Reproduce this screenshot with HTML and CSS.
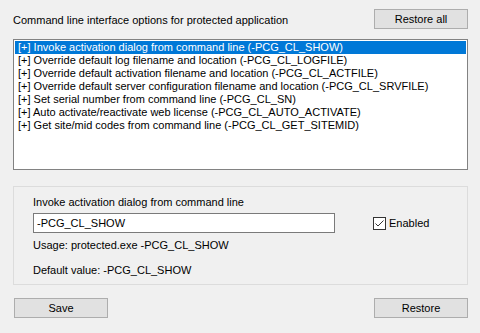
FILE: index.html
```html
<!DOCTYPE html>
<html lang="en">

<head>
    <meta charset="UTF-8">
    <meta name="viewport" content="width=device-width, initial-scale=1.0">
    <title>Command line options</title>
    <link rel="stylesheet" href="styles.css">
</head>

<body>
    <div class="dialog">
        <div class="header">
            <span class="caption">Command line interface options for protected application</span>
            <button class="btn">Restore all</button>
        </div>

        <ul class="listbox">
            <li class="selected">[+] Invoke activation dialog from command line (-PCG_CL_SHOW)</li>
            <li>[+] Override default log filename and location (-PCG_CL_LOGFILE)</li>
            <li>[+] Override default activation filename and location (-PCG_CL_ACTFILE)</li>
            <li>[+] Override default server configuration filename and location (-PCG_CL_SRVFILE)</li>
            <li>[+] Set serial number from command line (-PCG_CL_SN)</li>
            <li>[+] Auto activate/reactivate web license (-PCG_CL_AUTO_ACTIVATE)</li>
            <li>[+] Get site/mid codes from command line (-PCG_CL_GET_SITEMID)</li>
        </ul>

        <div class="group">
            <div class="group-label">Invoke activation dialog from command line</div>
            <div class="edit-row">
                <input class="edit" type="text" value="-PCG_CL_SHOW">
                <label class="check">
                    <span class="box">
                        <svg width="11" height="11" viewBox="0 0 11 11">
                            <path d="M1.5 5.5 L4 8 L9.5 2.5" fill="none" stroke="#333" stroke-width="1"/>
                        </svg>
                    </span>
                    Enabled
                </label>
            </div>
            <div class="usage">Usage: protected.exe -PCG_CL_SHOW</div>
            <div class="default">Default value: -PCG_CL_SHOW</div>
        </div>

        <div class="footer">
            <button class="btn">Save</button>
            <button class="btn">Restore</button>
        </div>
    </div>
</body>

</html>
```

FILE: styles.css
```css
body {
    margin: 0;
    background-color: #f0f0f0;
    font-family: "Liberation Sans", Arial, sans-serif;
    font-size: 11px;
    color: #000;
}

.dialog {
    width: 455px;
    padding: 9px 12px 0 13px;
}

.header {
    display: flex;
    justify-content: space-between;
    align-items: center;
    height: 20px;
}

.caption {
    padding-top: 2px;
}

.btn {
    width: 94px;
    height: 20px;
    padding: 0;
    border: 1px solid #adadad;
    background-color: #e1e1e1;
    font-family: inherit;
    font-size: 11px;
    color: #000;
}

.listbox {
    list-style: none;
    margin: 10px 0 0;
    padding: 1px;
    height: 127px;
    border: 1px solid #828282;
    background-color: #fff;
}

.listbox li {
    height: 13px;
    line-height: 13px;
    padding-left: 3px;
    white-space: nowrap;
}

.listbox li.selected {
    background-color: #0078d7;
    color: #fff;
}

.group {
    margin-top: 16px;
    height: 97px;
    border: 1px solid #dcdcdc;
    padding: 0 0 0 19px;
}

.group-label {
    margin-top: 9px;
    height: 13px;
}

.edit-row {
    display: flex;
    align-items: center;
    margin-top: 4px;
}

.edit {
    box-sizing: border-box;
    width: 302px;
    height: 20px;
    margin: 0;
    padding: 0 3px;
    border: 1px solid #7a7a7a;
    background: #fff;
    font-family: inherit;
    font-size: 11px;
}

.check {
    display: flex;
    align-items: center;
    gap: 3px;
    margin-left: 38px;
}

.box {
    display: block;
    box-sizing: border-box;
    width: 13px;
    height: 13px;
    border: 1px solid #333;
    background: #fff;
}

.box svg {
    display: block;
}

.usage {
    margin-top: 6px;
}

.default {
    margin-top: 13px;
}

.footer {
    display: flex;
    justify-content: space-between;
    margin-top: 13px;
    padding-left: 1px;
}
```
